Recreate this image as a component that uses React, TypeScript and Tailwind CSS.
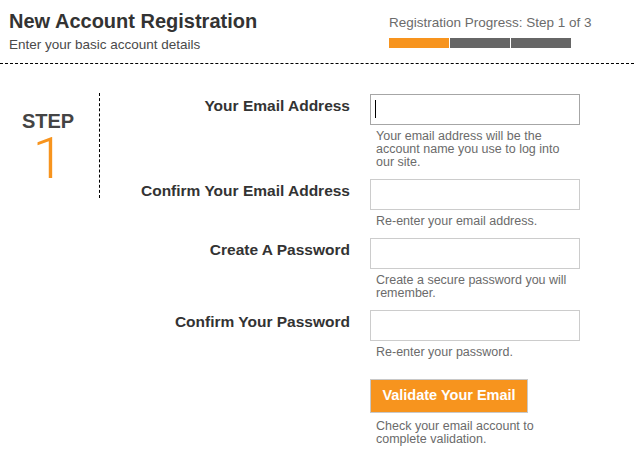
import React from 'react';

const fields = [
  { label: 'Your Email Address', help: 'Your email address will be the account name you use to log into our site.', active: true },
  { label: 'Confirm Your Email Address', help: 'Re-enter your email address.' },
  { label: 'Create A Password', help: 'Create a secure password you will remember.' },
  { label: 'Confirm Your Password', help: 'Re-enter your password.' },
];

function Field({ label, help, active }: { label: string; help: string; active?: boolean }) {
  return (
    <div className="flex gap-[20px]">
      <div className="w-[250px] pt-[3px] text-right text-[15.5px] leading-[18px] font-bold text-[#333]">{label}</div>
      <div className="w-[210px]">
        <div className="relative">
          <input
            type="text"
            className={`block w-[210px] h-[31px] border bg-white outline-none ${active ? 'border-[#a6a6a6]' : 'border-[#cccccc]'}`}
          />
          {active && <span className="absolute left-[5px] top-[6px] w-px h-[18px] bg-black" />}
        </div>
        <p className="mt-[5px] pl-[6px] pr-[4px] text-[12.5px] leading-[13px] text-[#6b6b6b]">{help}</p>
      </div>
    </div>
  );
}

export default function App() {
  return (
    <div className="w-[634px] h-[458px] bg-white overflow-hidden font-['Liberation_Sans',Arial,sans-serif]">
      <header className="h-[64px] border-b border-dashed border-black flex justify-between">
        <div className="pl-[9px] pt-[9px]">
          <h1 className="text-[20px] leading-[24px] font-bold text-[#333]">New Account Registration</h1>
          <p className="mt-[4px] text-[13.5px] leading-[16px] text-[#4a4a4a]">Enter your basic account details</p>
        </div>
        <div className="w-[245px] pt-[15px]">
          <p className="text-[13.5px] leading-[16px] text-[#6b6b6b]">Registration Progress: Step 1 of 3</p>
          <div className="mt-[7px] flex gap-px">
            <div className="w-[60px] h-[10px] bg-[#f7941e]" />
            <div className="w-[60px] h-[10px] bg-[#666666]" />
            <div className="w-[60px] h-[10px] bg-[#666666]" />
          </div>
        </div>
      </header>

      <div className="flex pt-[30px]">
        <div className="w-[100px] h-[105px] -mt-px border-r border-dashed border-black pl-[23px] pt-[16px]">
          <div className="w-[50px] flex flex-col items-center">
            <span className="text-[20px] leading-[24px] font-bold text-[#444]">STEP</span>
            <span className="mt-[3px] ml-[1px] font-['Roboto',sans-serif] font-light text-[58px] leading-[44px] text-[#f7941e]">1</span>
          </div>
        </div>

        <div className="flex flex-col gap-[10px]">
          {fields.map((f) => (
            <Field key={f.label} {...f} />
          ))}
          <div className="flex gap-[20px] mt-[10px]">
            <div className="w-[250px]" />
            <div className="w-[210px]">
              <button className="w-[158px] h-[34px] border border-[#c8c8c8] bg-[#f7941e] text-white text-[14.5px] font-bold">
                Validate Your Email
              </button>
              <p className="mt-[7px] pl-[6px] text-[12.5px] leading-[13px] text-[#6b6b6b]">
                Check your email account to complete validation.
              </p>
            </div>
          </div>
        </div>
      </div>
    </div>
  );
}
